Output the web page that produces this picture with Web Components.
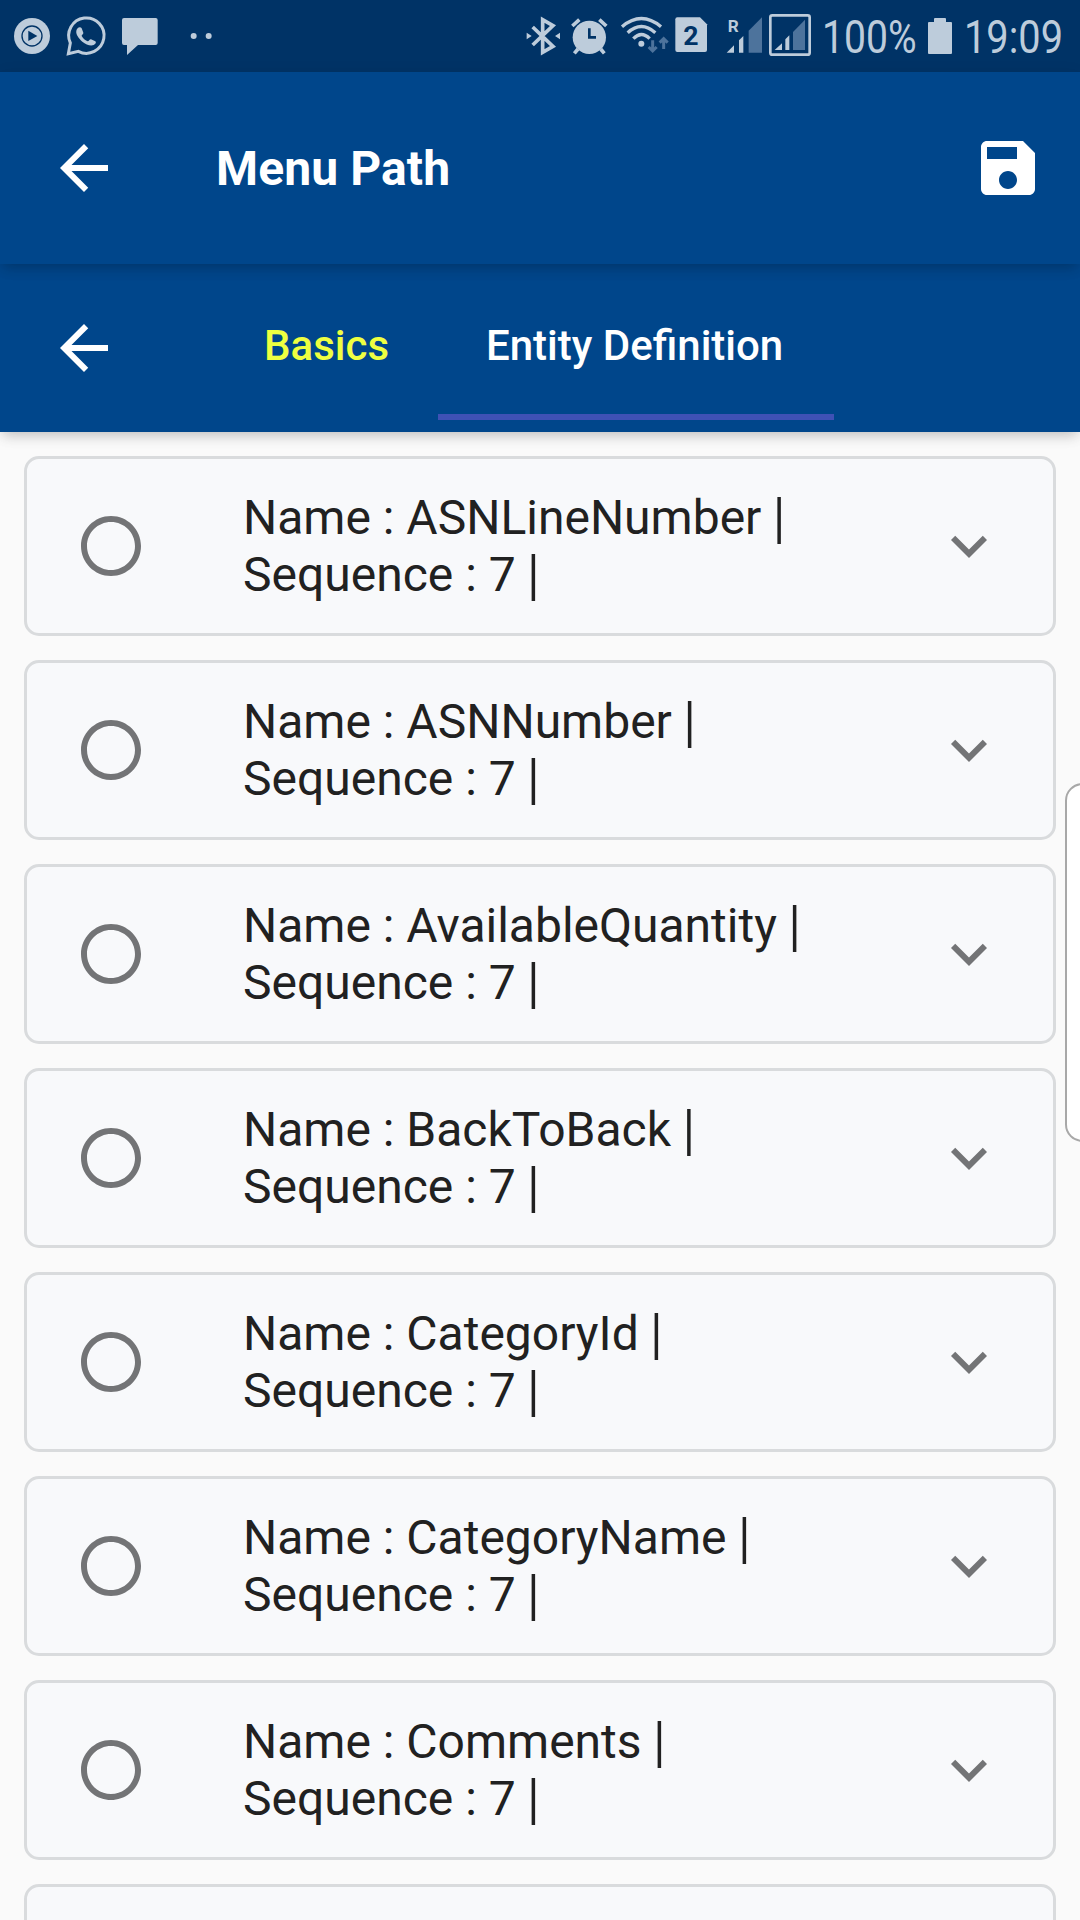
<!DOCTYPE html>
<html lang="en">
<head>
<meta charset="utf-8">
<title>Menu Path</title>
<style>
html,body{margin:0;height:1920px;overflow:hidden;background:#fafafa;font-family:Roboto,sans-serif}
</style>
</head>
<body>
<menu-path-app></menu-path-app>
<script>
const define = (name, html, setup) => {
  const t = document.createElement('template');
  t.innerHTML = html;
  customElements.define(name, class extends HTMLElement {
    constructor() {
      super();
      this.attachShadow({mode: 'open'}).appendChild(t.content.cloneNode(true));
    }
    connectedCallback() { if (setup) setup(this, this.shadowRoot); }
  });
};

const ICONS = {
  back: 'M20 11H7.83l5.59-5.59L12 4l-8 8 8 8 1.41-1.41L7.83 13H20v-2z',
  save: 'M17 3H5c-1.11 0-2 .9-2 2v14c0 1.1.89 2 2 2h14c1.1 0 2-.9 2-2V7l-4-4zm-5 16c-1.66 0-3-1.34-3-3s1.34-3 3-3 3 1.34 3 3-1.34 3-3 3zm3-10H5V5h10v4z',
  radio: 'M12 2C6.48 2 2 6.48 2 12s4.48 10 10 10 10-4.48 10-10S17.52 2 12 2zm0 18c-4.42 0-8-3.58-8-8s3.58-8 8-8 8 3.58 8 8-3.58 8-8 8z',
  more: 'M16.59 8.59L12 13.17 7.41 8.59 6 10l6 6 6-6z'
};
define('md-icon', `
<style>:host{display:block;width:72px;height:72px;flex:none}svg{display:block}</style>
<svg width="72" height="72" viewBox="0 0 24 24" fill="currentColor"><path/></svg>`,
  (el, r) => r.querySelector('path').setAttribute('d', ICONS[el.getAttribute('name')]));

define('status-bar', `
<style>
:host{display:flex;justify-content:space-between;height:72px;background:#003366;color:#bdccdb}
svg{display:block;flex:none}
.right{display:flex}
text{font-family:Roboto,sans-serif;fill:currentColor}
.dim{fill:#4d739c}.dimline{stroke:#4d739c}.dark{fill:#003366}
</style>
<svg width="270" height="72" viewBox="0 0 810 216" fill="currentColor">
  <circle cx="96" cy="108" r="54"/>
  <circle cx="96" cy="108" r="30" fill="none" stroke="#003366" stroke-width="4"/>
  <path class="dark" d="M85 92L112 108L85 123Z"/>
  <path d="M205 161L211 129A53 53 0 1 1 235 154Z" fill="none" stroke="currentColor" stroke-width="9" stroke-linejoin="miter"/>
  <path d="M233 85C236 81 243 81 245 85L250 98C251 102 244 105 245 108C250 117 257 121 263 124C266 125 269 117 273 118L286 124C290 128 286 133 281 135C272 139 258 134 247 125C236 115 227 103 229 93C230 89 231 87 233 85Z"/>
  <path d="M372 54H467Q473 54 473 60V129Q473 135 467 135H414L381 165V135H372Q366 135 366 129V60Q366 54 372 54Z"/>
  <circle cx="581" cy="108" r="9"/><circle cx="626" cy="108" r="9"/>
</svg>
<div class="right">
<svg width="310" height="72" viewBox="0 0 930 216" fill="currentColor">
  <path d="M68 81L129 139L98 157V59L129 77L68 135" fill="none" stroke="currentColor" stroke-width="11"/>
  <path d="M50 98L65 108L50 118ZM150 98L135 108L150 118Z"/>
  <circle cx="238" cy="112" r="50"/>
  <path d="M187 78L208 59M268 59L289 78M204 147L193 160M272 147L283 160" stroke="currentColor" stroke-width="11"/>
  <path d="M238 85V112H258" fill="none" stroke="#003366" stroke-width="8"/>
  <g fill="none" stroke="currentColor" stroke-width="10"><path d="M336 80Q394 31 453 80"/><path d="M353 98Q394 61 436 98"/><path d="M370 116Q394 91 419 116"/></g>
  <circle cx="394" cy="131" r="9"/>
  <path class="dimline" fill="none" stroke-width="9" d="M428 121V154M416 141L428 153L440 141M461 147V114M449 128L461 116L473 128"/>
  <path d="M502 52H570L591 73V150Q591 156 585 156H502Q496 156 496 150V58Q496 52 502 52Z"/>
  <text x="543" y="135" text-anchor="middle" font-size="76" font-weight="700" textLength="46" lengthAdjust="spacingAndGlyphs" style="fill:#003366">2</text>
  <text x="653" y="97" font-size="49" font-weight="700" textLength="33" lengthAdjust="spacingAndGlyphs">R</text>
  <path d="M650 158L672 136V158ZM687 158V121L700 108V158Z"/>
  <path class="dim" d="M716 158V92L756 52V158Z"/>
  <rect x="781" y="46" width="118" height="118" rx="6" fill="none" stroke="currentColor" stroke-width="8"/>
  <path d="M794 150L816 130V150ZM826 150V118L838 106V150Z"/>
  <path class="dim" d="M849 150V96L885 59V150Z"/>
</svg>
<svg width="260" height="72" viewBox="820 0 260 72" fill="currentColor">
  <text x="822" y="53.3" font-size="46" textLength="94.5" lengthAdjust="spacingAndGlyphs">100%</text>
  <path d="M929 22H934V19Q934 18 935 18H945Q946 18 946 19V22H951Q952 22 952 23V53Q952 54 951 54H929Q928 54 928 53V23Q928 22 929 22Z"/>
  <text x="964" y="53.3" font-size="46" textLength="99" lengthAdjust="spacingAndGlyphs">19:09</text>
</svg>
</div>`);

define('app-header', `
<style>
:host{display:flex;align-items:center;box-sizing:border-box;height:192px;padding:0 36px 0 48px;background:#00468b;color:#fff;position:relative;z-index:2;
box-shadow:0 6px 12px -3px rgba(0,0,0,.2),0 3px 18px rgba(0,0,0,.06)}
h1{flex:1;margin:0 0 0 96px;padding-top:2px;font-size:48px;line-height:56px;font-weight:700;letter-spacing:.12px}
</style>
<md-icon name="back"></md-icon><h1><slot></slot></h1><md-icon name="save"></md-icon>`);

define('tab-item', `
<style>
:host{display:flex;align-items:center;box-sizing:border-box;width:222px;height:144px;padding:0 0 6px 48px;font-size:42px;line-height:49px;font-weight:500;color:#eeff41;white-space:nowrap}
:host([active]){width:396px;color:#fff;padding-bottom:0;border-bottom:6px solid #3f51b5}
</style><slot></slot>`);

define('tab-header', `
<style>
:host{display:flex;align-items:center;box-sizing:border-box;height:168px;padding-left:48px;background:#00468b;color:#fff;position:relative;z-index:1;
box-shadow:0 6px 12px -3px rgba(0,0,0,.2),0 3px 18px rgba(0,0,0,.06)}
.tabs{display:flex;margin-left:96px}
</style>
<md-icon name="back"></md-icon><div class="tabs"><slot></slot></div>`);

define('entity-card', `
<style>
:host{display:flex;align-items:center;flex:none;box-sizing:border-box;height:180px;padding:0 48px;border:3px solid #d9dbdd;border-radius:15px;background:#f8f9fb;color:#737476}
.text{flex:1;margin-left:96px;font-size:48px;line-height:57px;color:#212121;white-space:nowrap}
.text div{height:57px}
.bar{display:inline-block;transform-origin:50% 31px;transform:translateY(1.1px) scaleY(1.17)}
</style>
<md-icon name="radio"></md-icon>
<div class="text"><div><span class="n"></span> <span class="bar">|</span></div><div><span class="s"></span> <span class="bar">|</span></div></div>
<md-icon name="more"></md-icon>`,
  (el, r) => {
    r.querySelector('.n').textContent = `Name : ${el.getAttribute('name')}`;
    r.querySelector('.s').textContent = `Sequence : ${el.getAttribute('sequence')}`;
  });

define('edge-handle', `
<style>:host{display:block;position:absolute;z-index:3;right:-20px;top:783px;width:35px;height:359px;box-sizing:border-box;border:2px solid #a8a8a8;border-radius:20px;background:#fff}</style>`);

define('menu-path-app', `
<style>
:host{display:flex;flex-direction:column;position:relative;width:1080px;height:1920px;overflow:hidden;background:#fafafa}
status-bar,app-header,tab-header{flex:none}
main{display:flex;flex-direction:column;gap:24px;padding:24px;flex:1;min-height:0;overflow:hidden}
</style>
<status-bar></status-bar>
<app-header>Menu Path</app-header>
<tab-header><tab-item>Basics</tab-item><tab-item active>Entity Definition</tab-item></tab-header>
<main>
<entity-card name="ASNLineNumber" sequence="7"></entity-card>
<entity-card name="ASNNumber" sequence="7"></entity-card>
<entity-card name="AvailableQuantity" sequence="7"></entity-card>
<entity-card name="BackToBack" sequence="7"></entity-card>
<entity-card name="CategoryId" sequence="7"></entity-card>
<entity-card name="CategoryName" sequence="7"></entity-card>
<entity-card name="Comments" sequence="7"></entity-card>
<entity-card class="next" name="" sequence=""></entity-card>
</main>
<edge-handle></edge-handle>`,
  (el, r) => r.querySelector('.next').shadowRoot.querySelector('.text').replaceChildren());
</script>
</body>
</html>
